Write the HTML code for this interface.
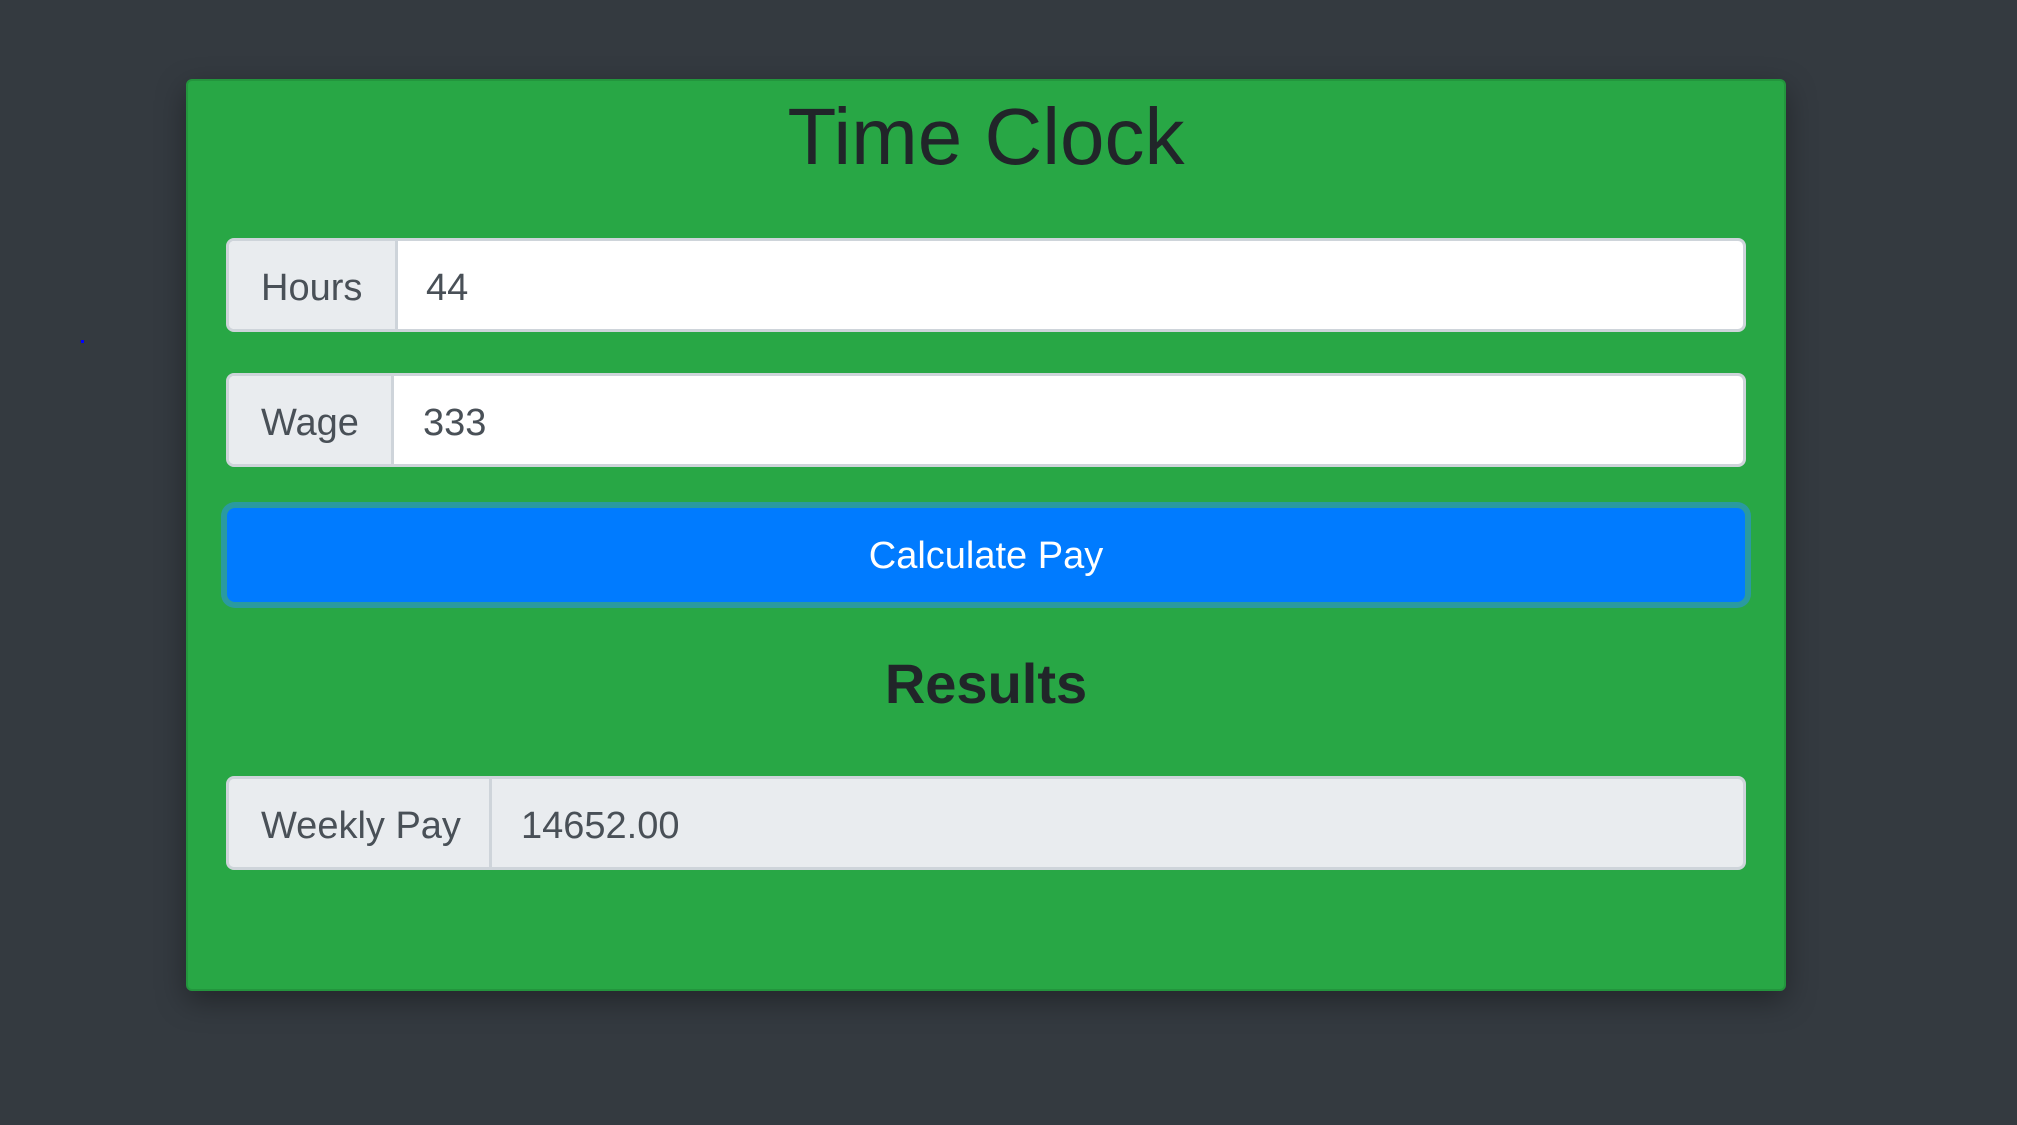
<!DOCTYPE html>
<html><head><style>
html,body{margin:0;padding:0;width:2017px;height:1125px;background:#343a40;overflow:hidden;font-family:"Liberation Sans",sans-serif}
.card{position:absolute;left:186px;top:79px;width:1600px;height:912px;background:#28a745;border:2px solid #23953d;border-radius:6px;box-sizing:border-box;box-shadow:0 10px 30px rgba(0,0,0,.35)}
.t{position:absolute;text-align:center;color:#212529;font-weight:500}
.grp{position:absolute;left:226px;width:1520px;height:94px;border:3px solid #ced4da;border-radius:8px;box-sizing:border-box;background:#fff;overflow:hidden;font-size:38px;color:#495057;white-space:nowrap}
.lab{position:absolute;left:0;top:0;bottom:0;background:#e9ecef;border-right:3px solid #ced4da;box-sizing:border-box;padding-left:32px;padding-top:3px;line-height:88px}
.val{position:absolute;top:3px;line-height:88px}
.btn{position:absolute;left:227px;top:508px;width:1518px;height:94px;background:#007bff;border-radius:8px;box-shadow:0 0 0 6px #2a9aa0;color:#fff;font-size:38px;text-align:center;line-height:96px}
</style></head><body>
<div style="position:absolute;left:81px;top:340px;width:3px;height:3px;background:#00f"></div>
<div class="card"></div>
<div class="t" style="top:87px;left:186px;width:1600px;font-size:80px;line-height:100px">Time Clock</div>
<div class="grp" style="top:238px"><div class="lab" style="width:169px">Hours</div><div class="val" style="left:197px">44</div></div>
<div class="grp" style="top:373px"><div class="lab" style="width:165px">Wage</div><div class="val" style="left:194px">333</div></div>
<div class="btn">Calculate Pay</div>
<div class="t" style="top:648px;left:186px;width:1600px;font-size:56px;line-height:72px;font-weight:bold">Results</div>
<div class="grp" style="top:776px;background:#e9ecef"><div class="lab" style="width:263px">Weekly Pay</div><div class="val" style="left:292px">14652.00</div></div>
</body></html>
